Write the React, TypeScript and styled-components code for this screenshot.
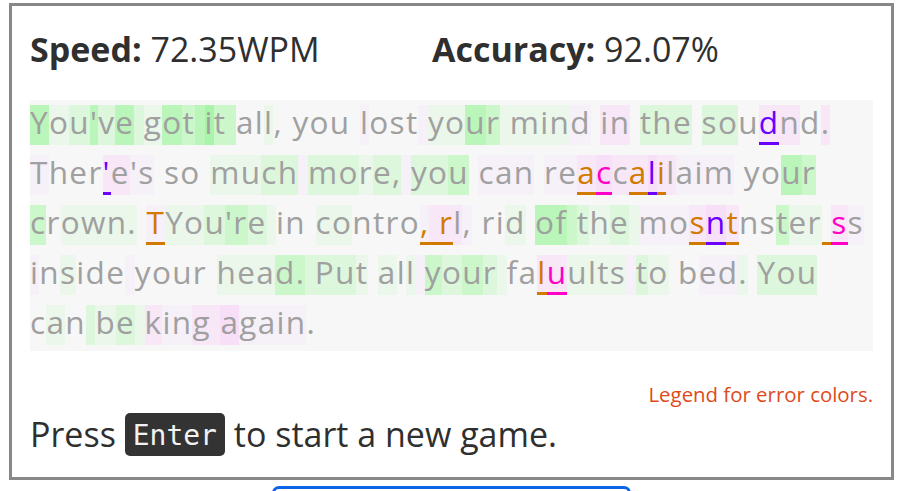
import React from "react";
import styled, { createGlobalStyle } from "styled-components";

const GlobalStyle = createGlobalStyle`
  html, body { margin: 0; padding: 0; background: #ffffff; }
  body { font-family: "Open Sans", "Noto Sans", sans-serif; }
`;

const LEVELS: Record<string, string> = {
  ".": "transparent",
  "1": "#eaf7ea",
  "2": "#dcf7dc",
  "3": "#cbf7cb",
  "4": "#baf6ba",
  "5": "#aaf3aa",
  a: "#f6f0f8",
  b: "#f7e7f7",
  c: "#f7dff7",
};

const ERR: Record<string, string> = { o: "#d27a00", m: "#ff00c8", p: "#6a00ff" };

interface LineData {
  text: string;
  bg: string;
  err: Record<number, string>;
}

const LINES: LineData[] = [
  {
    text: "You've got it all, you lost your mind in the soudnd.",
    bg: "4124242143" + "4533..1..." + "...a...a11" + "431111a.bb" + ".222.22.bb" + ".b",
    err: { 48: "p" },
  },
  {
    text: "Ther'e's so much more, you can reaccalilaim your",
    bg: "a...bbaa.." + "..1122a221" + "22a223.aaa" + ".aabcbbcbb" + "aaa...43",
    err: { 4: "p", 33: "o", 34: "m", 36: "o", 37: "p", 38: "o" },
  },
  {
    text: "crown. TYou're in contro, rl, rid of the mosntnster ss",
    bg: "3.1111.a11" + "23321...11" + "....abbba." + "..1.443212" + "1aabcb..31" + "1.ba",
    err: { 7: "o", 24: "o", 25: "o", 26: "o", 43: "o", 44: "p", 45: "o", 51: "o", 52: "m" },
  },
  {
    text: "inside your head. Put all your faluults to bed. You",
    bg: "a.1...a..." + "..11133222" + "1.1.1a3232" + "1..bb1111a" + "21..aa1.222",
    err: { 33: "o", 34: "m" },
  },
  {
    text: "can be king again.",
    bg: ".1.2121baabbcaaaa.",
    err: {},
  },
];

const Page = styled.div`
  padding: 3px 13px 0 9px;
`;

const Frame = styled.div`
  width: 885px;
  height: 477px;
  box-sizing: border-box;
  border: 3px solid #888888;
  padding: 18px 18px 19px;
  display: flex;
  flex-direction: column;
`;

const Stats = styled.div`
  display: grid;
  grid-template-columns: 402px 1fr;
  height: 50px;
  line-height: 50px;
  margin-bottom: 26px;
  font-size: 34px;
  color: #2f2f2f;
`;

const Stat = styled.div`
  white-space: nowrap;
`;

const Label = styled.span`
  font-weight: 700;
`;

const TextBox = styled.div`
  background: #f7f7f7;
  padding: 5px 0 6px;
  display: flex;
  flex-direction: column;
  gap: 10px;
  font-size: 31.5px;
  letter-spacing: 1.33px;
`;

const Line = styled.div`
  display: flex;
  height: 40px;
`;

const Cell = styled.span<{ $bg: string; $err?: string }>`
  display: inline-block;
  height: 40px;
  line-height: 33.6px;
  white-space: pre;
  background: ${(p) => p.$bg};
  color: ${(p) => p.$err ?? "#a0a0a0"};
  box-shadow: ${(p) => (p.$err ? `inset 0 -3px 0 ${p.$err}` : "none")};
`;

const Legend = styled.div`
  margin-top: 31px;
  height: 24px;
  line-height: 24px;
  text-align: right;
  font-size: 20.4px;
  color: #e04a1a;
`;

const PressRow = styled.div`
  margin-top: 6px;
  height: 44px;
  line-height: 44px;
  font-size: 34px;
  color: #2f2f2f;
  white-space: pre;
`;

const Kbd = styled.kbd`
  display: inline-block;
  vertical-align: bottom;
  box-sizing: border-box;
  height: 43px;
  line-height: 46px;
  padding: 0 8px;
  border-radius: 5px;
  background: #333333;
  color: #f2f2f2;
  font-family: "DejaVu Sans Mono", monospace;
  font-size: 28px;
  overflow: hidden;
`;

const Below = styled.div`
  margin: 6px 0 0 263px;
  width: 359px;
  height: 40px;
  box-sizing: border-box;
  border: 3px solid #0b63e5;
  border-radius: 7px;
`;

export default function App() {
  return (
    <Page>
      <GlobalStyle />
      <Frame>
        <Stats>
          <Stat>
            <Label>Speed:</Label> 72.35WPM
          </Stat>
          <Stat>
            <Label>Accuracy:</Label> 92.07%
          </Stat>
        </Stats>
        <TextBox>
          {LINES.map((line, li) => (
            <Line key={li}>
              {line.text.split("").map((ch, i) => (
                <Cell key={i} $bg={LEVELS[line.bg[i] ?? "."]} $err={line.err[i] ? ERR[line.err[i]] : undefined}>
                  {ch}
                </Cell>
              ))}
            </Line>
          ))}
        </TextBox>
        <Legend>Legend for error colors.</Legend>
        <PressRow>
          {"Press "}
          <Kbd>Enter</Kbd>
          {" to start a new game."}
        </PressRow>
      </Frame>
      <Below />
    </Page>
  );
}
